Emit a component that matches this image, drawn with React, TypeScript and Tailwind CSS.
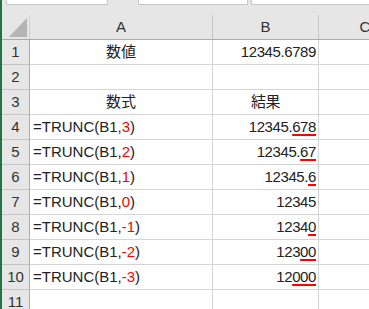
import type { ReactNode } from 'react';

const FONT = '"Liberation Sans", "Noto Sans CJK JP", sans-serif';

interface Row {
  num: number;
  a?: ReactNode;
  aAlign?: 'left' | 'center';
  b?: ReactNode;
  bAlign?: 'right' | 'center';
}

function Formula({ arg }: { arg: string }) {
  return (
    <>
      =TRUNC(B1,<span className="text-[#ff0000]">{arg}</span>)
    </>
  );
}

function Cut({ keep, cut }: { keep: string; cut: string }) {
  return (
    <>
      {keep}
      <span className="underline decoration-[#ff0000] decoration-2 underline-offset-[2px]">{cut}</span>
    </>
  );
}

const rows: Row[] = [
  { num: 1, a: '数値', aAlign: 'center', b: '12345.6789', bAlign: 'right' },
  { num: 2 },
  { num: 3, a: '数式', aAlign: 'center', b: '結果', bAlign: 'center' },
  { num: 4, a: <Formula arg="3" />, b: <Cut keep="12345." cut="678" /> },
  { num: 5, a: <Formula arg="2" />, b: <Cut keep="12345." cut="67" /> },
  { num: 6, a: <Formula arg="1" />, b: <Cut keep="12345." cut="6" /> },
  { num: 7, a: <Formula arg="0" />, b: '12345' },
  { num: 8, a: <Formula arg="-1" />, b: <Cut keep="1234" cut="0" /> },
  { num: 9, a: <Formula arg="-2" />, b: <Cut keep="123" cut="00" /> },
  { num: 10, a: <Formula arg="-3" />, b: <Cut keep="12" cut="000" /> },
  { num: 11 },
];

export default function App() {
  return (
    <div
      className="flex w-[369px] h-[309px] overflow-hidden bg-[#e6e6e6] text-[15px] text-[#222]"
      style={{ fontFamily: FONT }}
    >
      {/* green edge */}
      <div className="w-[2px] shrink-0 bg-[#217346]" />

      <div className="flex flex-col shrink-0 w-[460px]">
        {/* bottom of formula bar */}
        <div className="flex h-[15px] shrink-0">
          <div className="ml-[4px] w-[102px] h-[5px] bg-white border border-t-0 border-[#c6c6c6]" />
          <div className="ml-[30px] w-[110px] h-[5px] bg-white border border-t-0 border-[#c6c6c6]" />
          <div className="ml-[3px] w-[130px] h-[5px] bg-white border border-t-0 border-[#c6c6c6]" />
        </div>

        {/* column headers */}
        <div className="grid grid-cols-[28px_183px_106px_93px] h-[25px] shrink-0 border-b border-[#ababab] text-[#333]">
          <div className="relative border-r border-[#d0d0d0]">
            <svg className="absolute left-[7px] top-[3px]" width="18" height="19" viewBox="0 0 18 19">
              <polygon points="0,19 18,19 18,0" fill="#b4b4b4" />
            </svg>
          </div>
          <div className="flex items-center justify-center border-r border-[#c6c6c6]">A</div>
          <div className="flex items-center justify-center border-r border-[#c6c6c6]">B</div>
          <div className="flex items-center justify-center border-r border-[#c6c6c6]">C</div>
        </div>

        {/* rows */}
        <div className="bg-white">
          {rows.map((r) => (
            <div
              key={r.num}
              className="grid grid-cols-[28px_183px_106px_93px] h-[25px] leading-[24px]"
            >
              <div className="bg-[#e6e6e6] text-center text-[#333] border-r border-b border-[#ababab] border-b-[#c6c6c6]">
                {r.num}
              </div>
              <div
                className={`whitespace-nowrap border-r border-b border-[#d4d4d4] ${
                  r.aAlign === 'center' ? 'text-center' : 'pl-[3px]'
                }`}
              >
                {r.a}
              </div>
              <div
                className={`whitespace-nowrap border-r border-b border-[#d4d4d4] tracking-[-0.4px] ${
                  r.bAlign === 'center' ? 'text-center' : 'text-right pr-[2px]'
                }`}
              >
                {r.b}
              </div>
              <div className="border-r border-b border-[#d4d4d4]" />
            </div>
          ))}
        </div>
      </div>
    </div>
  );
}
